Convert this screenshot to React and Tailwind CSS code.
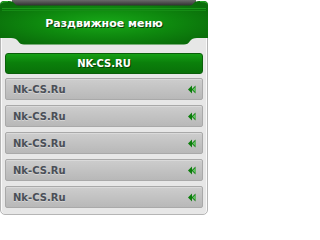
const items = ['Nk-CS.Ru', 'Nk-CS.Ru', 'Nk-CS.Ru', 'Nk-CS.Ru', 'Nk-CS.Ru']

function Arrows() {
  return (
    <svg width="8" height="9" viewBox="0 0 8 9" className="shrink-0">
      <path d="M0 4.5 L4 0.5 L4 8.5 Z" fill="#0b7d0b" />
      <path d="M3.5 4.5 L7.5 0.5 L7.5 8.5 Z" fill="#0b7d0b" />
      <path d="M4.6 4.5 L7.5 1.8 L7.5 7.2 Z" fill="#63c163" />
    </svg>
  )
}

function HeaderShape() {
  return (
    <svg width="208" height="46" viewBox="0 0 208 46" className="absolute left-0 top-0">
      <defs>
        <linearGradient id="top" x1="0" y1="0" x2="0" y2="1">
          <stop offset="0" stopColor="#6b6b6b" />
          <stop offset="1" stopColor="#2c2c2c" />
        </linearGradient>
        <radialGradient id="grn" cx="0.5" cy="0.5" r="0.6">
          <stop offset="0" stopColor="#18a818" />
          <stop offset="0.55" stopColor="#0e880e" />
          <stop offset="1" stopColor="#0a6d0a" />
        </radialGradient>
      </defs>
      <rect x="12" y="0" width="184" height="6" fill="url(#top)" />
      <path
        d="M0 5 Q0 1 4 1 L9 1 Q13 1 15 4 Q16 5.5 19 5.5 L189 5.5 Q192 5.5 193 4 Q195 1 199 1 L204 1 Q208 1 208 5 L208 38 L197 38 Q192 38 190 41 Q188 44.5 184 44.5 L24 44.5 Q20 44.5 18 41 Q16 38 11 38 L0 38 Z"
        fill="url(#grn)"
      />
      <path d="M2 8.5 H206" stroke="#1a961a" strokeWidth="1" />
      <path d="M2 10.5 H206" stroke="#158c15" strokeWidth="1" />
      <path d="M1 3 Q3 1.5 8 1.5" stroke="#2bb02b" strokeWidth="1" fill="none" />
      <path d="M200 1.5 Q205 1.5 207 3" stroke="#2bb02b" strokeWidth="1" fill="none" />
    </svg>
  )
}

export default function App() {
  return (
    <div className="relative w-[208px] h-[218px] bg-white font-['DejaVu_Sans',sans-serif]">
      {/* panel body */}
      <div className="absolute left-0 right-0 top-[30px] bottom-[3px] rounded-b-[5px] border border-[#b5b5b5] bg-[#e7e7e7] shadow-[inset_1px_0_0_#fafafa,inset_-1px_0_0_#fafafa]" />

      <div className="relative h-[45px] flex items-center justify-center">
        <HeaderShape />
        <span className="relative mt-[4px] text-[11px] font-bold text-white [text-shadow:1px_1px_0_#0a3d0a]">
          Раздвижное меню
        </span>
      </div>

      <div className="relative flex flex-col gap-[5px] px-[5px] pt-[8px]">
        <div className="h-[21px] flex items-center justify-center rounded-[3px] border border-[#0a5f0a] bg-[linear-gradient(#16a016,#0b800b_45%,#097109)] text-[10px] font-bold text-white [text-shadow:1px_1px_0_#064006] mb-[-1px]">
          NK-CS.RU
        </div>
        {items.map((label, i) => (
          <div
            key={i}
            className="h-[22px] flex items-center justify-between rounded-[2px] border border-[#a9a9a9] bg-[linear-gradient(#cdcdcd,#b8b8b8)] pl-[7px] pr-[6px] shadow-[inset_0_1px_0_#dadada]"
          >
            <span className="text-[10px] font-bold text-[#4a4f57] [text-shadow:0_1px_0_#d4d4d4]">{label}</span>
            <Arrows />
          </div>
        ))}
      </div>
    </div>
  )
}
